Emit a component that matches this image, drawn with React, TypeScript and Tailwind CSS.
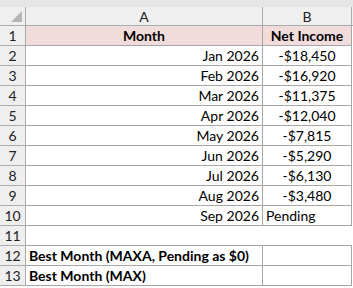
const rows: [string, string][] = [
  ['Jan 2026', '-$18,450'],
  ['Feb 2026', '-$16,920'],
  ['Mar 2026', '-$11,375'],
  ['Apr 2026', '-$12,040'],
  ['May 2026', '-$7,815'],
  ['Jun 2026', '-$5,290'],
  ['Jul 2026', '-$6,130'],
  ['Aug 2026', '-$3,480'],
  ['Sep 2026', 'Pending'],
];

function RowHead({ n }: { n: number }) {
  return (
    <div className="w-[26px] h-5 shrink-0 bg-[#efefef] border-r border-b border-[#ababab] flex items-center justify-center text-[14px] text-[#222]">
      {n}
    </div>
  );
}

export default function App() {
  return (
    <div className="w-[353px] h-[288px] bg-white overflow-hidden text-black" style={{ fontFamily: 'Lato, "Liberation Sans", sans-serif' }}>
      <div className="h-[7px] bg-[#e6e6e6]" />
      <div className="flex h-[19px] bg-[#efefef] border-b border-[#ababab]">
        <div className="w-[26px] shrink-0 border-r border-[#ababab] relative">
          <svg className="absolute right-[3px] bottom-[3px]" width="11" height="11" viewBox="0 0 11 11">
            <polygon points="11,0 11,11 0,11" fill="#b5b5b5" />
          </svg>
        </div>
        <div className="w-[237px] shrink-0 border-r border-[#ababab] flex items-center justify-center text-[14px] text-[#222]">A</div>
        <div className="w-[89px] shrink-0 border-r border-[#ababab] flex items-center justify-center text-[14px] text-[#222]">B</div>
      </div>

      <div className="flex">
        <RowHead n={1} />
        <div className="w-[237px] h-5 shrink-0 bg-[#f2dcdb] border-r border-b border-[#a6a6a6] flex items-center justify-center font-bold text-[14px]">Month</div>
        <div className="w-[89px] h-5 shrink-0 bg-[#f2dcdb] border-r border-b border-[#a6a6a6] flex items-center justify-center font-bold text-[14px]">Net Income</div>
      </div>

      {rows.map(([m, v], i) => (
        <div key={m} className="flex">
          <RowHead n={i + 2} />
          <div className="w-[237px] h-5 shrink-0 border-r border-b border-[#a6a6a6] flex items-center justify-end px-[3px] text-[14px]">{m}</div>
          <div className={`w-[89px] h-5 shrink-0 border-r border-b border-[#a6a6a6] flex items-center px-[3px] text-[14px] ${v === 'Pending' ? 'justify-start' : 'justify-center'}`}>{v}</div>
        </div>
      ))}

      <div className="flex">
        <RowHead n={11} />
        <div className="w-[326px] h-5 shrink-0 border-b border-[#a6a6a6]" />
      </div>

      <div className="flex">
        <RowHead n={12} />
        <div className="w-[237px] h-5 shrink-0 border-r border-b border-[#a6a6a6] flex items-center px-[3px] font-bold text-[14px] whitespace-nowrap">Best Month (MAXA, Pending as $0)</div>
        <div className="w-[89px] h-5 shrink-0 border-r border-b border-[#a6a6a6]" />
      </div>
      <div className="flex">
        <RowHead n={13} />
        <div className="w-[237px] h-5 shrink-0 border-r border-b border-[#a6a6a6] flex items-center px-[3px] font-bold text-[14px] whitespace-nowrap">Best Month (MAX)</div>
        <div className="w-[89px] h-5 shrink-0 border-r border-b border-[#a6a6a6]" />
      </div>
    </div>
  );
}
